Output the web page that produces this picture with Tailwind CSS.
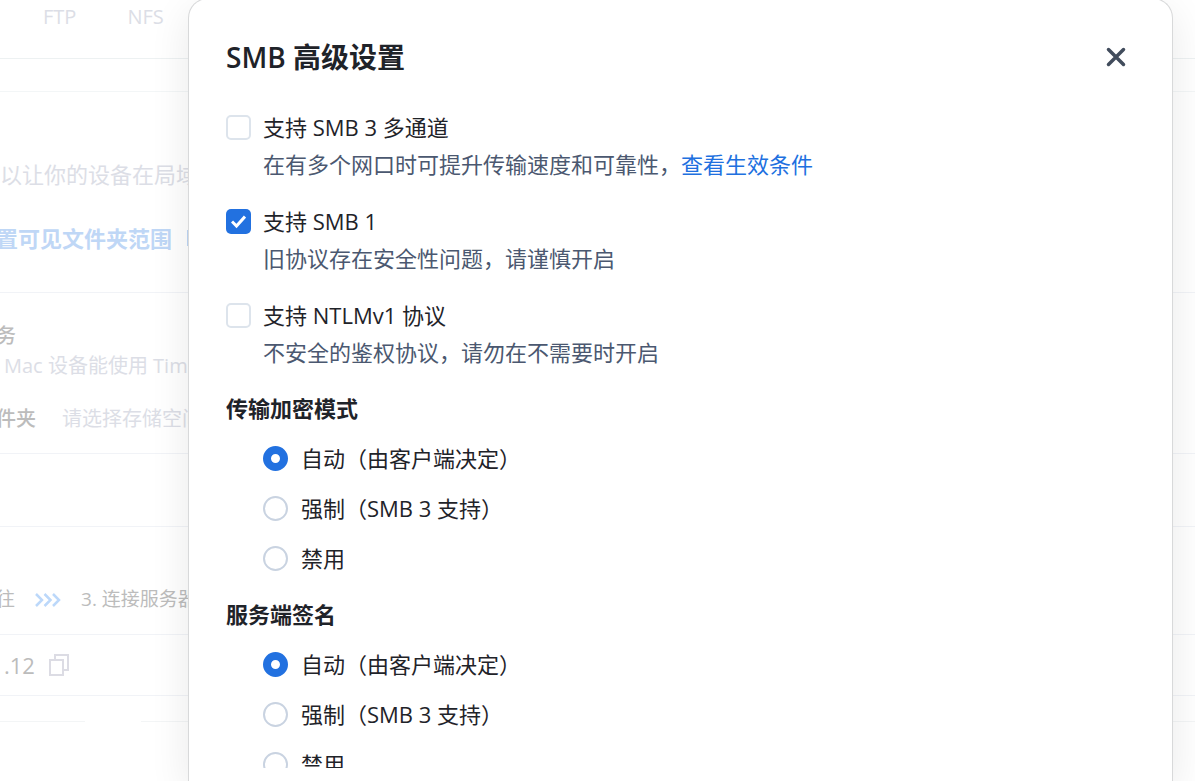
<!DOCTYPE html>
<html lang="zh-CN">
<head>
    <meta charset="UTF-8">
    <meta name="viewport" content="width=device-width, initial-scale=1.0">
    <title>SMB 高级设置</title>
    <script src="https://cdn.jsdelivr.net/npm/@tailwindcss/browser@4"></script>
    <style>
        body { font-family: 'Open Sans', 'Noto Sans CJK SC', sans-serif; }
    </style>
</head>
<body class="bg-white">

<div class="relative h-screen overflow-hidden">

    <!-- 背景页面 -->
    <main class="whitespace-nowrap text-[#dcdee6]">
        <nav class="flex h-[59px] gap-[51px] border-b border-[#edf1f2] pl-[43px] text-xl leading-[34px]">
            <a href="#">FTP</a>
            <a href="#">NFS</a>
        </nav>
        <div class="h-[33px] border-b border-[#f3f6f7]"></div>

        <section class="h-[201px] border-b border-[#f1f3f7] pt-[62px] text-[22px]">
            <p class="leading-10">以让你的设备在局域网</p>
            <div class="-ml-1 flex gap-[15px] pt-6 font-bold leading-10 text-[#bfd7f6]">
                <a href="#">置可见文件夹范围</a>
                <span class="mt-3 h-4 w-0.5 bg-[#bfd7f6]"></span>
            </div>
        </section>

        <section class="h-[161px] border-b border-[#f1f3f7] pt-7 text-xl">
            <h2 class="-ml-1 font-medium leading-[30px] text-[#bcbcbc]">务</h2>
            <p class="pl-1 leading-[30px]">Mac 设备能使用 Time</p>
            <div class="-ml-1 flex gap-[26px] pt-5 leading-[36px]">
                <span class="font-medium text-[#bcbcbc]">件夹</span>
                <span>请选择存储空间</span>
            </div>
        </section>
        <div class="h-[73px] border-b border-[#f1f3f7]"></div>

        <div class="-ml-1 flex h-[108px] items-center gap-5 border-b border-[#f1f3f7] pt-[38px] text-[19px] text-[#bcbcbc]">
            <span>往</span>
            <svg class="h-4 w-[26px]" viewBox="0 0 26 16" fill="none" stroke="#bcd8fa" stroke-width="2.500">
                <path d="M1 2l6 6-6 6M9.500 2l6 6-6 6M18 2l6 6-6 6"/>
            </svg>
            <span>3. 连接服务器</span>
        </div>

        <div class="flex h-[61px] items-center gap-[14px] border-b border-[#f1f3f7] pl-1 text-[22px] text-[#bcbcbc]">
            <span>.12</span>
            <button type="button" aria-label="复制">
                <svg class="h-[22px] w-5" viewBox="0 0 20 22" fill="none" stroke="#dcdce4" stroke-width="2">
                    <path d="M1 6h13v15H1zM6 6V1h13v15h-5"/>
                </svg>
            </button>
        </div>
        <div class="flex h-[26px] items-end gap-14">
            <span class="h-px w-[85px] bg-[#f3f5f6]"></span>
            <span class="h-px flex-1 bg-[#f3f5f6]"></span>
        </div>
    </main>

    <!-- 弹窗 -->
    <div role="dialog" aria-labelledby="dialogTitle"
        class="absolute -top-0.5 bottom-0 left-[188px] right-[22px] flex flex-col rounded-t-[20px] border border-b-0 border-[#d8d9da] bg-white px-[37px] pb-[13px] text-[22px] text-[#1f2329] shadow-[0_12px_40px_rgba(0,0,0,0.09)]">

        <header class="flex shrink-0 items-center justify-between pb-[29px] pt-9 pr-[7px]">
            <h1 id="dialogTitle" class="text-[28px] font-semibold leading-[44px]">SMB 高级设置</h1>
            <button type="button" aria-label="关闭">
                <svg class="size-6" viewBox="0 0 24 24" fill="none" stroke="#414c5c" stroke-width="3.500" stroke-linecap="round">
                    <path d="M4.500 4.500l15 15M19.500 4.500l-15 15"/>
                </svg>
            </button>
        </header>

        <form class="min-h-0 flex-1 overflow-hidden">
            <div class="flex flex-col gap-5">
                <div>
                    <label class="flex items-center gap-3 leading-[38px]">
                        <input type="checkbox" class="size-[25px] appearance-none rounded-[5px] border-2 border-[#dde4ec]">
                        支持 SMB 3 多通道
                    </label>
                    <p class="pl-[37px] leading-9 text-[#4b5870]">在有多个网口时可提升传输速度和可靠性，<a href="#" class="text-[#2070df]">查看生效条件</a></p>
                </div>
                <div>
                    <label class="flex items-center gap-3 leading-[38px]">
                        <span class="grid size-[25px] place-items-center">
                            <input type="checkbox" checked class="col-start-1 row-start-1 size-[25px] appearance-none rounded-[5px] bg-[#2271e0]">
                            <svg class="z-10 col-start-1 row-start-1 size-[15px]" viewBox="0 0 15 15" fill="none" stroke="#fff" stroke-width="3">
                                <path d="M1 7.500l4.500 4.500L14 2.500"/>
                            </svg>
                        </span>
                        支持 SMB 1
                    </label>
                    <p class="pl-[37px] leading-9 text-[#4b5870]">旧协议存在安全性问题，请谨慎开启</p>
                </div>
                <div>
                    <label class="flex items-center gap-3 leading-[38px]">
                        <input type="checkbox" class="size-[25px] appearance-none rounded-[5px] border-2 border-[#dde4ec]">
                        支持 NTLMv1 协议
                    </label>
                    <p class="pl-[37px] leading-9 text-[#4b5870]">不安全的鉴权协议，请勿在不需要时开启</p>
                </div>
            </div>

            <fieldset class="pt-5">
                <legend class="contents"><span class="block pb-[7px] font-bold leading-9">传输加密模式</span></legend>
                <div class="pl-[37px] leading-[50px]">
                    <label class="flex items-center gap-[13px]">
                        <input type="radio" name="encrypt" checked class="size-[25px] appearance-none rounded-full border-2 border-[#c9d3e1] checked:border-8 checked:border-[#2271e0]">
                        自动（由客户端决定）
                    </label>
                    <label class="flex items-center gap-[13px]">
                        <input type="radio" name="encrypt" class="size-[25px] appearance-none rounded-full border-2 border-[#c9d3e1] checked:border-8 checked:border-[#2271e0]">
                        强制（SMB 3 支持）
                    </label>
                    <label class="flex items-center gap-[13px]">
                        <input type="radio" name="encrypt" class="size-[25px] appearance-none rounded-full border-2 border-[#c9d3e1] checked:border-8 checked:border-[#2271e0]">
                        禁用
                    </label>
                </div>
            </fieldset>

            <fieldset class="pt-[13px]">
                <legend class="contents"><span class="block pb-[7px] font-bold leading-9">服务端签名</span></legend>
                <div class="pl-[37px] leading-[50px]">
                    <label class="flex items-center gap-[13px]">
                        <input type="radio" name="sign" checked class="size-[25px] appearance-none rounded-full border-2 border-[#c9d3e1] checked:border-8 checked:border-[#2271e0]">
                        自动（由客户端决定）
                    </label>
                    <label class="flex items-center gap-[13px]">
                        <input type="radio" name="sign" class="size-[25px] appearance-none rounded-full border-2 border-[#c9d3e1] checked:border-8 checked:border-[#2271e0]">
                        强制（SMB 3 支持）
                    </label>
                    <label class="flex items-center gap-[13px]">
                        <input type="radio" name="sign" class="size-[25px] appearance-none rounded-full border-2 border-[#c9d3e1] checked:border-8 checked:border-[#2271e0]">
                        禁用
                    </label>
                </div>
            </fieldset>
        </form>
    </div>
</div>

</body>
</html>
